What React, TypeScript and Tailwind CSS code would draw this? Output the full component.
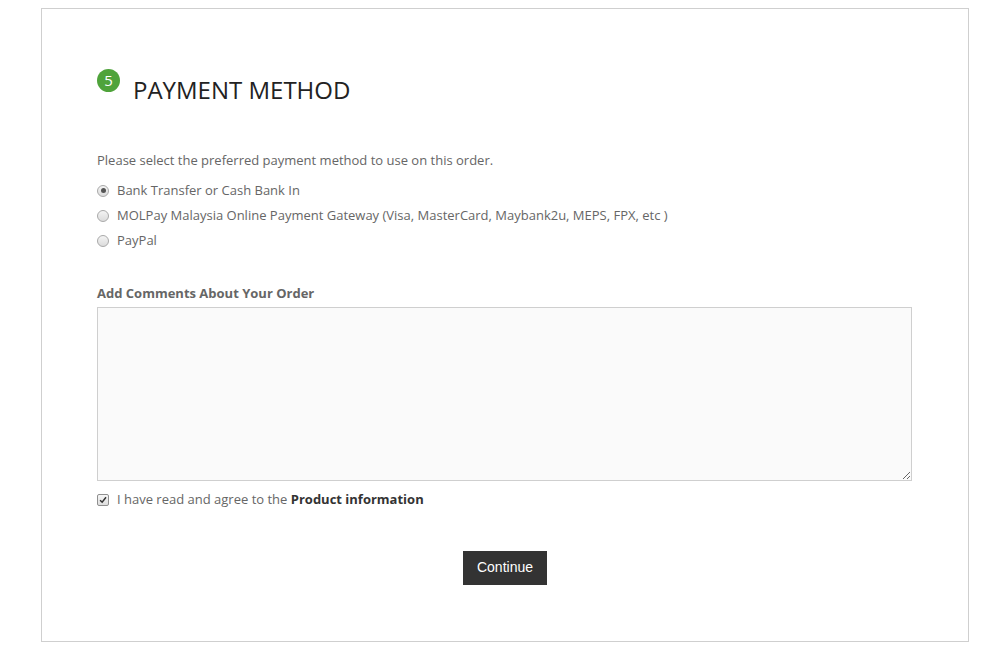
import { useState } from 'react';

const methods = [
  'Bank Transfer or Cash Bank In',
  'MOLPay Malaysia Online Payment Gateway (Visa, MasterCard, Maybank2u, MEPS, FPX, etc )',
  'PayPal',
];

function Radio({ checked }: { checked: boolean }) {
  return (
    <span className="flex h-[12px] w-[12px] shrink-0 items-center justify-center rounded-full border border-[#a9a9a9] bg-gradient-to-b from-[#f4f4f4] to-[#dcdcdc]">
      {checked && <span className="h-[5px] w-[5px] rounded-full bg-[#555]" />}
    </span>
  );
}

export default function App() {
  const [method, setMethod] = useState(0);
  const [agree, setAgree] = useState(true);

  return (
    <div className="min-h-[647px] bg-white pt-[8px] pl-[41px] font-['Open_Sans',sans-serif] text-[13px] text-[#666]">
      <div className="h-[634px] w-[928px] border border-[#cfcfcf] px-[55px] pt-[60px]">
        <div className="flex items-start">
          <span className="flex h-[23px] w-[23px] items-center justify-center rounded-full bg-[#4fa33b] text-[15px] leading-none text-white">
            5
          </span>
          <h2 className="ml-[13px] mt-[6px] text-[24px] leading-[30px] font-normal text-[#222]">PAYMENT METHOD</h2>
        </div>

        <p className="mt-[46px] leading-[18px]">Please select the preferred payment method to use on this order.</p>

        <div className="mt-[9px] flex flex-col">
          {methods.map((m, i) => (
            <label key={m} className="flex h-[25px] cursor-pointer items-center" onClick={() => setMethod(i)}>
              <Radio checked={method === i} />
              <span className="ml-[8px]">{m}</span>
            </label>
          ))}
        </div>

        <div className="mt-[31px] font-bold leading-[18px]">Add Comments About Your Order</div>
        <textarea className="mt-[5px] block h-[174px] w-[815px] border border-[#cfcfcf] bg-[#fafafa] p-2 outline-none" />

        <label className="mt-[9px] flex cursor-pointer items-center" onClick={() => setAgree(!agree)}>
          <span className="flex h-[12px] w-[12px] shrink-0 items-center justify-center rounded-[2px] border border-[#8f8f8f] bg-gradient-to-b from-[#f6f6f6] to-[#dedede]">
            {agree && (
              <svg viewBox="0 0 12 12" className="h-[10px] w-[10px]">
                <path d="M2.5 6.2 L5 8.6 L9.6 2.8" fill="none" stroke="#333" strokeWidth="1.8" />
              </svg>
            )}
          </span>
          <span className="ml-[8px]">
            I have read and agree to the <b className="text-[#333]">Product information</b>
          </span>
        </label>

        <div className="mt-[41px] flex justify-center">
          <button className="h-[34px] w-[84px] bg-[#333] font-['Liberation_Sans',Arial,sans-serif] text-[14px] text-white">
            Continue
          </button>
        </div>
      </div>
    </div>
  );
}
